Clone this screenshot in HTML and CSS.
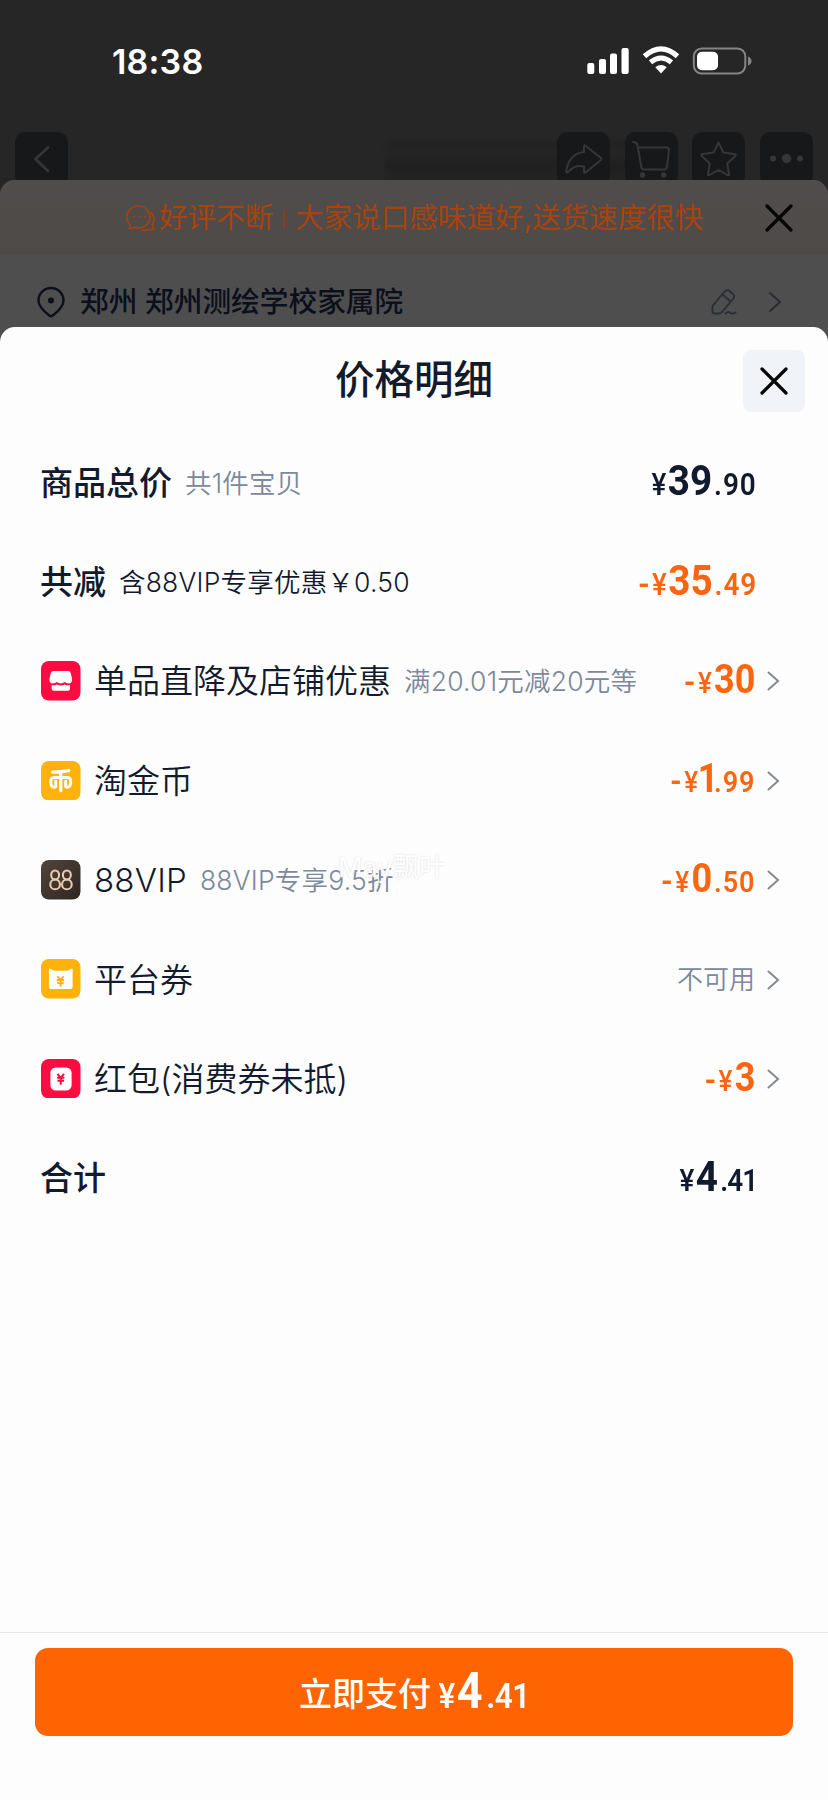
FILE: index.html
```html
<!DOCTYPE html>
<html lang="zh-CN">
<head>
<meta charset="utf-8">
<title>价格明细</title>
<link rel="stylesheet" href="styles.css">
</head>
<body>
<div class="phone">
  <header class="top">
    <div class="status">
      <span class="time">18:38</span>
      <svg class="signals" width="168" height="32" viewBox="0 0 168 32" fill="#fff">
        <rect x="1.3" y="17" width="7" height="11" rx="2"/>
        <rect x="13" y="13" width="7" height="15" rx="2"/>
        <rect x="24" y="7.5" width="7" height="20.5" rx="2"/>
        <rect x="35.5" y="2" width="7.2" height="26" rx="2"/>
        <g fill="none" stroke="#fff">
          <path d="M58.5 10.3Q75 -4.500 91.500 10.300" stroke-width="5.200"/>
          <path d="M64.500 16.300Q75 7.700 85.500 16.300" stroke-width="5"/>
        </g>
        <path d="M69.300 21.300Q75 16.900 80.700 21.300L75 27.600Z"/>
        <rect x="107.800" y="2.400" width="51.500" height="25.200" rx="8" fill="none" stroke="#858585" stroke-width="2"/>
        <rect x="111" y="5.700" width="21" height="18.600" rx="5"/>
        <path d="M162 10.500Q165.500 12 165.500 15T162 19.500Z" fill="#858585"/>
      </svg>
    </div>
    <div class="toolbar">
      <div class="tool">
        <svg width="53" height="53" viewBox="0 0 53 53"><path class="thick" d="M33 15.500L20.500 27L33 39"/></svg>
      </div>
      <div class="toolbar-shade"></div>
      <div class="tools">
        <div class="tool"><svg width="53" height="53" viewBox="0 0 53 53"><path d="M27 14.500Q27 12.500 28.500 13.700L44 26Q45 27 44 28L28.500 40.500Q27 41.500 27 39.500V34.500Q18 32.500 11.500 39.500Q8.500 42 9.500 37.500Q13 21.500 27 20Z"/></svg></div>
        <div class="tool"><svg width="53" height="53" viewBox="0 0 53 53"><path d="M8 10Q12 10 12.500 13.500L16.500 36Q17 37.500 19 37.500H38Q41.500 37.500 42 34.500L44 18Q44 15.500 42 15.500H13"/><circle class="dot" cx="17.500" cy="43" r="2.700"/><circle class="dot" cx="38.700" cy="43" r="2.700"/></svg></div>
        <div class="tool"><svg width="53" height="53" viewBox="0 0 53 53"><path d="M26.500 10.500L31.300 20.500L43.500 22.300Q44 23 43.500 23.700L35.200 31.500L37.200 42.500Q37 43.700 35.800 43.200L26.500 38L17.200 43.200Q16 43.700 15.800 42.500L17.800 31.500L9.500 23.700Q9 23 9.500 22.300L21.700 20.500Z"/></svg></div>
        <div class="tool"><svg width="53" height="53" viewBox="0 0 53 53"><circle class="dot" cx="13" cy="26.500" r="3"/><circle class="dot" cx="26.500" cy="26.500" r="4.700"/><circle class="dot" cx="40" cy="26.500" r="3"/></svg></div>
      </div>
    </div>
  </header>

  <section class="order">
    <div class="banner">
      <svg class="bubbles" width="30" height="28" viewBox="0 0 30 28" fill="none" stroke="#a3420f" stroke-width="1.700" stroke-linecap="round" stroke-linejoin="round">
        <path d="M13 2A11.500 11 0 1 1 8.500 23.300Q6 25 3 24.500Q4.500 22.500 3.500 20A11.500 11 0 0 1 13 2Z"/>
        <path d="M24.300 8Q30 12.500 26.500 20.500Q26.300 23 28 25.500Q25.500 26.200 23 25.200Q20 27 16 26"/>
        <path d="M8 12.500h.1M13.500 12.500h.1M19 12.500h.1" stroke-width="2.200"/>
      </svg>
      <span class="praise">好评不断</span>
      <span class="bar"></span>
      <span class="praise">大家说口感味道好,送货速度很快</span>
      <svg class="banner-close" width="28" height="28" viewBox="0 0 28 28"><path d="M2 2L26 26M26 2L2 26"/></svg>
    </div>
    <div class="address">
      <svg width="30" height="32" viewBox="0 0 30 32" fill="none" stroke="#0c0f1c" stroke-width="2.400" stroke-linejoin="round"><path d="M15 2A12.500 12.500 0 0 1 27.500 14.500C27.500 20.500 22 25.500 16.700 29.500Q15 30.800 13.300 29.500C8 25.500 2.500 20.500 2.500 14.500A12.500 12.500 0 0 1 15 2Z"/><circle cx="15" cy="14.500" r="3" fill="#0c0f1c" stroke="none"/></svg>
      <span class="place">郑州 郑州测绘学校家属院</span>
      <svg class="pencil" width="26" height="28" viewBox="0 0 26 28" fill="none" stroke="#2b2e36" stroke-width="1.900" stroke-linecap="round" stroke-linejoin="round"><path d="M1.500 18L13.500 3.500Q16 1.200 18.700 3.200L22 6Q24 8.500 22.300 10.700L11 24Q9.500 25.500 7.500 25.500H3Q1.500 25.500 1.500 24ZM11.500 6.500L19 13M14.500 25.500Q17 23 19 24.800T24.500 24.500"/></svg>
      <svg class="go" width="14" height="22" viewBox="0 0 14 22" fill="none" stroke="#292c33" stroke-width="2.100"><path d="M1.500 1.500L12 11L1.500 20.500"/></svg>
    </div>
  </section>

  <main class="sheet">
    <div class="sheet-head">
      <h1>价格明细</h1>
      <button class="close" aria-label="关闭"><svg width="28" height="28" viewBox="0 0 28 28"><path d="M2 2L26 26M26 2L2 26"/></svg></button>
    </div>

    <ul class="rows">
      <li class="row">
        <span class="name strong">商品总价</span><span class="note">共1件宝贝</span>
        <span class="price large"><span class="yen">¥</span><b>39</b><i>.90</i></span>
      </li>
      <li class="row">
        <span class="name strong">共减</span><span class="note dark">含88VIP专享优惠￥0.50</span>
        <span class="price large off"><span class="minus">-</span><span class="yen">¥</span><b>35</b><i>.49</i></span>
      </li>
      <li class="row">
        <svg class="icon" width="39.500" height="39.500" viewBox="0 0 40 40"><rect width="40" height="40" rx="8" fill="#ff0b42"/><path d="M12.500 10.200H27.500Q29.500 10.200 30.200 12.500L31.500 18.500Q31.500 22.700 28.200 22.700Q25.500 22.700 24 21.200Q22 22.700 20 22.700T16 21.200Q14.500 22.700 11.800 22.700Q8.500 22.700 8.500 18.500L9.800 12.500Q10.500 10.200 12.500 10.200Z" fill="#fff"/><path d="M10.800 24.300Q13.500 25.200 16 23.700Q20 25.800 24 23.700Q26.500 25.200 29.300 24.300V28Q29.300 30 27.300 30H12.800Q10.800 30 10.800 28Z" fill="#fff"/></svg>
        <span class="name">单品直降及店铺优惠</span><span class="note">满20.01元减20元等</span>
        <span class="price off"><span class="minus">-</span><span class="yen">¥</span><b>30</b></span>
        <svg class="arrow" width="13" height="20" viewBox="0 0 13 20"><path d="M1.500 1.500L11 10L1.500 18.500"/></svg>
      </li>
      <li class="row">
        <svg class="icon" width="39.500" height="39.500" viewBox="0 0 40 40"><rect width="40" height="40" rx="8" fill="#ffb20a"/><g fill="none" stroke="#fff" stroke-width="3.400" stroke-linecap="round"><path d="M12 11.300Q21 11.300 28 9.800M20 11.500V30"/><path d="M13.500 26.700Q10 26 10 22.500V20Q10 16.700 13.500 16.700H26.500Q30 16.700 30 20V22.500Q30 26 26.500 26.700M15 20.500V26.200M25 20.500V26.200" stroke-width="3"/></g></svg>
        <span class="name">淘金币</span>
        <span class="price off"><span class="minus">-</span><span class="yen">¥</span><b class="one">1</b><i>.99</i></span>
        <svg class="arrow" width="13" height="20" viewBox="0 0 13 20"><path d="M1.500 1.500L11 10L1.500 18.500"/></svg>
      </li>
      <li class="row">
        <svg class="icon" width="39.500" height="39.500" viewBox="0 0 40 40"><defs><linearGradient id="vip" x1="0" y1="0" x2="1" y2="1"><stop offset="0" stop-color="#51453b"/><stop offset="1" stop-color="#302620"/></linearGradient></defs><rect width="40" height="40" rx="8" fill="url(#vip)"/><g fill="none" stroke="#ebcab1" stroke-width="2.100"><ellipse cx="14.300" cy="15.200" rx="4" ry="4.600"/><ellipse cx="14.300" cy="24.700" rx="4.900" ry="5"/><ellipse cx="26.200" cy="15.200" rx="4" ry="4.600"/><ellipse cx="26.200" cy="24.700" rx="4.900" ry="5"/></g></svg>
        <span class="name vip">88VIP</span><span class="note">88VIP专享9.5折</span>
        <span class="watermark">May飘叶</span>
        <span class="price off"><span class="minus">-</span><span class="yen">¥</span><b>0</b><i>.50</i></span>
        <svg class="arrow" width="13" height="20" viewBox="0 0 13 20"><path d="M1.500 1.500L11 10L1.500 18.500"/></svg>
      </li>
      <li class="row">
        <svg class="icon" width="39.500" height="39.500" viewBox="0 0 40 40"><rect width="40" height="40" rx="8" fill="#ffb20a"/><path d="M8 11Q8 9.200 9.500 9.800L13.500 12H26.500L30.500 9.800Q32 9.200 32 11V28Q32 30.300 29.700 30.300H10.300Q8 30.300 8 28Z" fill="#fff"/><path d="M16.500 17.500L19.800 21L23 17.500M16 21.300H23.500M16.500 24.300H23M19.800 21V28" fill="none" stroke="#ffae20" stroke-width="1.900"/></svg>
        <span class="name">平台券</span>
        <span class="unavailable">不可用</span>
        <svg class="arrow" width="13" height="20" viewBox="0 0 13 20"><path d="M1.500 1.500L11 10L1.500 18.500"/></svg>
      </li>
      <li class="row">
        <svg class="icon" width="39.500" height="39.500" viewBox="0 0 40 40"><rect width="40" height="40" rx="8" fill="#ff0b42"/><rect x="9.500" y="8.500" width="21.500" height="23.500" rx="5.500" fill="#fff"/><path d="M16.700 15L20 19L23.300 15M16.300 19H23.700M16.700 22H23.300M20 19V26" fill="none" stroke="#ff0b42" stroke-width="2"/></svg>
        <span class="name">红包(消费券未抵)</span>
        <span class="price off"><span class="minus">-</span><span class="yen">¥</span><b>3</b></span>
        <svg class="arrow" width="13" height="20" viewBox="0 0 13 20"><path d="M1.500 1.500L11 10L1.500 18.500"/></svg>
      </li>
      <li class="row">
        <span class="name strong">合计</span>
        <span class="price large"><span class="yen">¥</span><b>4</b><i class="tail-one">.41</i></span>
      </li>
    </ul>

    <footer class="pay-bar">
      <button class="pay"><span class="pay-label">立即支付</span><span class="price pay-price"><span class="yen">¥</span><b>4</b><i class="tail-one">.41</i></span></button>
    </footer>
  </main>
</div>
</body>
</html>
```
FILE: styles.css
```css
* { box-sizing: border-box; }
body {
  margin: 0;
  font-family: Inter, "Noto Sans CJK SC", sans-serif;
  color: #121a2e;
  background: #fdfdfd;
}
button { border: 0; padding: 0; font: inherit; }
svg { display: block; flex: none; }

.phone {
  width: 828px;
  height: 1800px;
  display: flex;
  flex-direction: column;
  overflow: hidden;
  background: #262627;
}

/* Dimmed page behind the sheet */
.top { height: 180px; flex: none; }
.status {
  height: 132px;
  padding: 46px 74px 0 112px;
  display: flex;
  justify-content: space-between;
  align-items: flex-start;
}
.time {
  color: #fff;
  font-size: 34px;
  line-height: 32px;
  font-weight: 600;
  letter-spacing: 0.2px;
}
.toolbar {
  height: 48px;
  padding: 0 15px;
  display: flex;
  justify-content: space-between;
  overflow: hidden;
}
.toolbar-shade {
  flex: 1;
  margin: 9px -100px 0 318px;
  border-radius: 8px;
  background: linear-gradient(#222, #252525 35%, #202020 60%, #242424);
  filter: blur(2px);
}
.tools { display: flex; gap: 14.7px; position: relative; }
.tool {
  width: 53px;
  height: 53px;
  border-radius: 10px;
  background: #17181a;
}
.tool path { fill: none; stroke: #363637; stroke-width: 2; stroke-linejoin: round; stroke-linecap: round; }
.tool .thick { stroke-width: 2.6; }
.tool .dot { fill: #363637; }

.order {
  height: 165px;
  flex: none;
  border-radius: 15px 15px 0 0;
  background: #4e4e4e;
  overflow: hidden;
}
.banner {
  height: 75px;
  padding: 0 35px 0 126px;
  display: flex;
  align-items: center;
  background: linear-gradient(#504d4c, #4e4a48);
}
.bubbles { margin-right: 3px; }
.praise {
  font-size: 28.6px;
  line-height: 40px;
  font-weight: 400;
  color: #a8430e;
  white-space: nowrap;
}
.bar { flex: none; width: 1.5px; height: 19px; margin: 3px 10px 0 10px; background: #8b3e19; }
.banner-close { margin-left: auto; }
.banner-close path, .close path { fill: none; stroke: #050505; stroke-width: 3.2; stroke-linecap: round; }
.address {
  height: 90px;
  padding: 31px 46px 0 36px;
  display: flex;
  align-items: flex-start;
}
.place {
  margin: -4px 0 0 14px;
  font-size: 28.7px;
  line-height: 40px;
  font-weight: 500;
  color: #0c0f1c;
}
.pencil { margin: 2px 31px 0 auto; }
.go { margin-top: 5px; }

/* Price sheet */
.sheet {
  flex: 1;
  margin-top: -18px;
  display: flex;
  flex-direction: column;
  border-radius: 15px 15px 0 0;
  background: #fdfdfd;
}
.sheet-head {
  height: 106px;
  padding: 23px 23px 0;
  display: grid;
  grid-template-columns: 62px 1fr 62px;
}
h1 {
  grid-column: 2;
  margin: 0;
  text-align: center;
  font-size: 39.5px;
  line-height: 60px;
  font-weight: 500;
}
.close {
  width: 62px;
  height: 62px;
  border-radius: 8px;
  background: #f0f4f8;
  display: grid;
  place-items: center;
}

.rows {
  list-style: none;
  margin: 0;
  padding: 0 48px 0 40px;
  display: flex;
  flex-direction: column;
}
.row {
  height: 99.4px;
  display: flex;
  align-items: center;
  position: relative;
  white-space: nowrap;
}
.icon { margin: 0 13.5px 1px 1px; }
.name { font-size: 33px; line-height: 48px; font-weight: 350; }
.name.strong { font-weight: 500; }
.name.vip { letter-spacing: 0.2px; }
.note {
  margin-left: 13px;
  font-size: 26.5px;
  line-height: 38px;
  font-weight: 350;
  letter-spacing: 0.2px;
  color: #7c889c;
}
.note.dark { color: #121a2e; }
.unavailable {
  margin-left: auto;
  font-size: 26px;
  line-height: 38px;
  font-weight: 350;
  color: #7c889c;
}

/* Narrow numerals, squeezed towards the right edge */
.price {
  margin-left: auto;
  display: flex;
  align-items: baseline;
  font-family: Roboto, sans-serif;
  font-weight: 600;
  line-height: 50px;
  transform: scaleX(0.9);
  transform-origin: right;
}
.row > .price:last-child { margin-right: 24px; }
.off { color: #fc6510; }
.price b { font-size: 40px; font-weight: 700; }
.price i { font-size: 30px; font-style: normal; letter-spacing: 1.1px; margin: 0 -1px 0 2px; }
.yen { font-size: 29px; width: 18px; font-weight: 500; }
.minus { font-size: 34px; width: 15.5px; }
.price .one { letter-spacing: -5px; margin-left: -3px; }
.price .one + i { margin-left: 0; }
.large b { font-size: 43px; }
.large i, .large .yen { font-size: 31px; }
.price .tail-one { letter-spacing: -1px; margin-right: -1px; margin-left: 2.5px; }
.arrow { margin-left: 12px; }
.arrow path { fill: none; stroke: #858990; stroke-width: 2; stroke-linecap: round; }

.watermark {
  position: absolute;
  left: 298px;
  top: 19px;
  font-size: 27px;
  line-height: 36px;
  color: #fff;
  text-shadow: 0 0 2px #d8d8d8;
}

.pay-bar {
  height: 168px;
  margin-top: auto;
  padding: 15px 35px 0;
  border-top: 1px solid #e6e8ea;
}
.pay {
  width: 100%;
  height: 88px;
  border-radius: 13px;
  background: #ff6403;
  color: #fff;
  display: flex;
  justify-content: center;
  align-items: center;
}
.pay-label { font-size: 33px; line-height: 48px; font-weight: 500; padding-top: 4px; }
.pay-price { margin-left: 6px; transform-origin: left; margin-right: -10px; padding-top: 3px; }
.pay-price b { font-size: 50px; }
.pay-price i, .pay-price .yen { font-size: 35px; }
.pay-price .yen { width: 22px; }
.pay-price .tail-one { margin-left: 4px; letter-spacing: -0.5px; }
```
